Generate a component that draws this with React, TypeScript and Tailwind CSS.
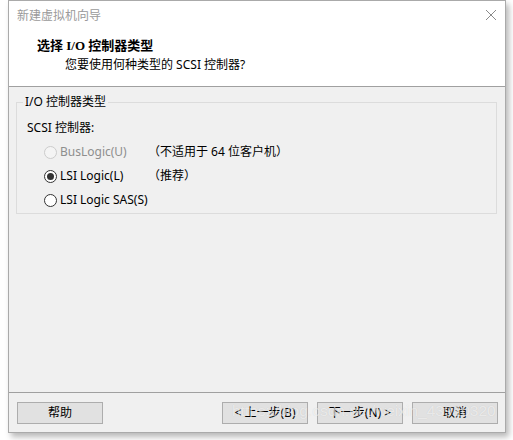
import React from 'react';

const font = 'font-["Segoe_UI","Noto_Sans","Noto_Sans_CJK_SC",sans-serif]';

type RadioProps = { label: string; note?: string; checked?: boolean; disabled?: boolean };

const Radio: React.FC<RadioProps> = ({ label, note, checked, disabled }) => (
    <div className="flex items-center h-[24px]">
        <div className="flex items-center w-[104px]">
            <span
                className={`w-[13px] h-[13px] rounded-full border flex items-center justify-center ${
                    disabled ? 'border-[#cccccc] bg-[#f4f4f4]' : 'border-[#333333] bg-white'
                }`}
            >
                {checked && <span className="w-[7px] h-[7px] rounded-full bg-[#333333]" />}
            </span>
            <span className={`ml-[3px] ${disabled ? 'text-[#8e8e8e]' : 'text-black'}`}>{label}</span>
        </div>
        {note && <span className="text-black">{note}</span>}
    </div>
);

const Button: React.FC<{ label: string; className?: string }> = ({ label, className }) => (
    <div
        className={`w-[86px] h-[22px] bg-[#e1e1e1] border border-[#adadad] flex items-center justify-center text-black ${className ?? ''}`}
    >
        {label}
    </div>
);

export default function App() {
    return (
        <div className={`w-[513px] h-[440px] bg-white relative overflow-hidden text-[12px] leading-none ${font}`}>
            <div className="ml-[8px] w-[498px] h-[433px] border border-[#aaaaaa] flex flex-col bg-white shadow-[3px_4px_6px_rgba(0,0,0,0.28)]">
                {/* Title bar */}
                <div className="h-[30px] flex items-center justify-between pl-[8px] pr-[8px]">
                    <span className="text-[#9a9a9a]">新建虚拟机向导</span>
                    <svg width="12" height="12" viewBox="0 0 12 12" className="mt-[-2px]">
                        <path d="M1 1 L11 11 M11 1 L1 11" stroke="#8a8a8a" strokeWidth="1" />
                    </svg>
                </div>

                {/* Header */}
                <div className="h-[56px] pl-[28px] pt-[8px] border-b border-[#a0a0a0]">
                    <div className='font-bold text-[13px] text-black font-["Liberation_Serif","Noto_Sans_CJK_SC",serif]'>
                        选择 I/O 控制器类型
                    </div>
                    <div className="mt-[7px] ml-[28px] text-black">您要使用何种类型的 SCSI 控制器?</div>
                </div>

                {/* Content */}
                <div className="flex-1 bg-[#f0f0f0] pt-[15px] pl-[7px] pr-[8px]">
                    <div className="relative border border-[#dcdcdc] h-[112px] pl-[10px] pt-[18px]">
                        <span className="absolute top-[-7px] left-[6px] px-[2px] bg-[#f0f0f0] text-black">I/O 控制器类型</span>
                        <div className="text-black h-[14px] flex items-center">SCSI 控制器:</div>
                        <div className="pl-[17px] mt-[5px]">
                            <Radio label="BusLogic(U)" note="（不适用于 64 位客户机）" disabled />
                            <Radio label="LSI Logic(L)" note="（推荐）" checked />
                            <Radio label="LSI Logic SAS(S)" />
                        </div>
                    </div>
                </div>

                {/* Footer */}
                <div className="h-[40px] bg-[#f0f0f0] border-t border-[#a0a0a0] flex items-start pt-[9px] pl-[8px] pr-[7px]">
                    <Button label="帮助" />
                    <div className="flex-1" />
                    <Button label="< 上一步(B)" />
                    <Button label="下一步(N) >" className="ml-[9px]" />
                    <Button label="取消" className="ml-[9px]" />
                </div>
            </div>

            {/* Watermark */}
            <span className='absolute left-[232px] top-[403px] whitespace-nowrap text-[15.5px] text-white/60 font-["Liberation_Sans",sans-serif] [text-shadow:0_0_1px_rgba(0,0,0,0.12)]'>
                https://blog.csdn.net/weixin_43910320
            </span>
        </div>
    );
}
